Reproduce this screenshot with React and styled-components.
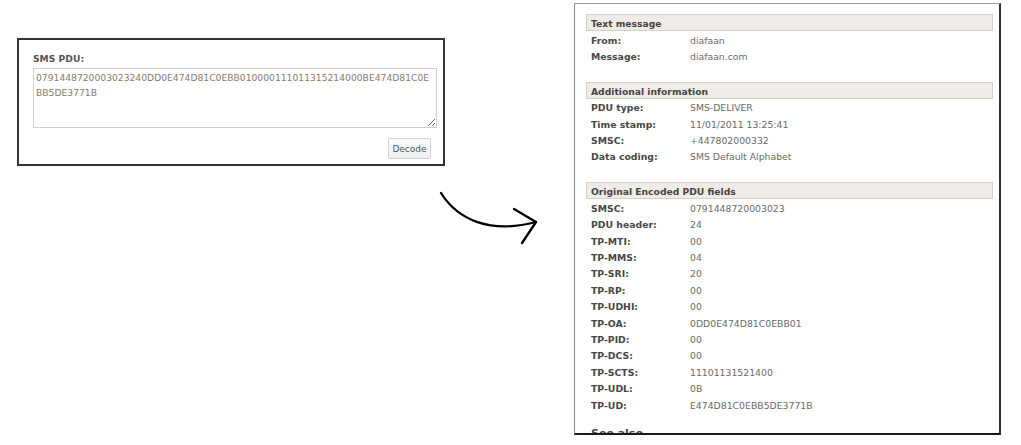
import React from "react";
import styled, { createGlobalStyle } from "styled-components";

const Global = createGlobalStyle`
  html, body { margin: 0; padding: 0; background: #fff; }
  body { font-family: "DejaVu Sans", Verdana, sans-serif; font-size: 9.2px; }
  * { box-sizing: border-box; }
`;

const Page = styled.div`
  display: flex;
  align-items: flex-start;
  width: 1021px;
  height: 445px;
  overflow: hidden;
`;

const FormBox = styled.div`
  margin: 38px 0 0 17px;
  width: 428px;
  height: 128px;
  border: 2px solid #333;
  padding: 12px 6px 5px 14px;
  display: flex;
  flex-direction: column;
`;

const FieldLabel = styled.label`
  font-weight: bold;
  font-size: 9.2px;
  line-height: 14px;
  color: #555;
  margin-bottom: 2px;
`;

const PduInput = styled.textarea`
  width: 404px;
  height: 60px;
  border: 1px solid #cfcfcf;
  padding: 1px 2px;
  font-family: "DejaVu Sans", Verdana, sans-serif;
  font-size: 9.2px;
  line-height: 15px;
  color: #8a7a6b;
  background: #fff;
  resize: both;
  outline: none;
  word-break: break-all;
`;

const ButtonRow = styled.div`
  display: flex;
  justify-content: flex-end;
  padding-right: 6px;
  margin-top: 10px;
`;

const DecodeButton = styled.button`
  height: 21px;
  width: 43px;
  padding: 0;
  border: 1px solid #d2d2d2;
  border-radius: 2px;
  background: linear-gradient(#fbfbfb, #efefef);
  font-family: "DejaVu Sans", Verdana, sans-serif;
  font-size: 9px;
  color: #555;
`;

const ArrowArea = styled.div`
  width: 129px;
  margin-top: 180px;
  flex-shrink: 0;
  svg { overflow: visible; display: block; }
`;

const ResultPanel = styled.div`
  margin-top: 3px;
  width: 427px;
  height: 432px;
  flex-shrink: 0;
  border-top: 1px solid #9a9a9a;
  border-left: 1px solid #8a8a8a;
  border-right: 2px solid #333;
  border-bottom: 2px solid #1a1a1a;
  padding: 10px 6px 0 11px;
  overflow: hidden;
`;

const Section = styled.section`
  margin-bottom: 16.5px;
`;

const SectionHeader = styled.div`
  height: 17px;
  background: #efece7;
  border: 1px solid #d6d1ca;
  padding-left: 4px;
  font-weight: bold;
  font-size: 9.2px;
  line-height: 17px;
  color: #454545;
  margin-bottom: 1.5px;
`;

const Rows = styled.div`
  display: flex;
  flex-direction: column;
`;

const Row = styled.div`
  display: grid;
  grid-template-columns: 99px 1fr;
  height: 16.4px;
  line-height: 16.4px;
  padding-left: 5px;
  font-size: 9.3px;
`;

const Label = styled.span`
  font-weight: bold;
  color: #474747;
`;

const Value = styled.span`
  color: #6a6a6a;
`;

const SeeAlso = styled.h3`
  margin: -3px 0 0 5px;
  font-size: 11px;
  line-height: 14px;
  font-weight: bold;
  color: #454545;
`;

const pdu =
  "0791448720003023240DD0E474D81C0EBB010000111011315214000BE474D81C0EBB5DE3771B";

const sections = [
  {
    title: "Text message",
    rows: [
      ["From:", "diafaan"],
      ["Message:", "diafaan.com"],
    ],
  },
  {
    title: "Additional information",
    rows: [
      ["PDU type:", "SMS-DELIVER"],
      ["Time stamp:", "11/01/2011 13:25:41"],
      ["SMSC:", "+447802000332"],
      ["Data coding:", "SMS Default Alphabet"],
    ],
  },
  {
    title: "Original Encoded PDU fields",
    rows: [
      ["SMSC:", "0791448720003023"],
      ["PDU header:", "24"],
      ["TP-MTI:", "00"],
      ["TP-MMS:", "04"],
      ["TP-SRI:", "20"],
      ["TP-RP:", "00"],
      ["TP-UDHI:", "00"],
      ["TP-OA:", "0DD0E474D81C0EBB01"],
      ["TP-PID:", "00"],
      ["TP-DCS:", "00"],
      ["TP-SCTS:", "11101131521400"],
      ["TP-UDL:", "0B"],
      ["TP-UD:", "E474D81C0EBB5DE3771B"],
    ],
  },
];

function Arrow() {
  return (
    <svg width="129" height="80" viewBox="0 0 129 80">
      <path
        d="M-4 13 C13 40, 45 54, 91 42"
        fill="none"
        stroke="#000"
        strokeWidth="2.3"
        strokeLinecap="round"
      />
      <path
        d="M69 29 L91 42 L77 63"
        fill="none"
        stroke="#000"
        strokeWidth="2.3"
        strokeLinecap="round"
        strokeLinejoin="round"
      />
    </svg>
  );
}

export default function App() {
  return (
    <>
      <Global />
      <Page>
        <FormBox>
          <FieldLabel htmlFor="pdu">SMS PDU:</FieldLabel>
          <PduInput id="pdu" readOnly defaultValue={pdu} spellCheck={false} />
          <ButtonRow>
            <DecodeButton type="button">Decode</DecodeButton>
          </ButtonRow>
        </FormBox>
        <ArrowArea>
          <Arrow />
        </ArrowArea>
        <ResultPanel>
          {sections.map((s) => (
            <Section key={s.title}>
              <SectionHeader>{s.title}</SectionHeader>
              <Rows>
                {s.rows.map(([l, v]) => (
                  <Row key={l + v}>
                    <Label>{l}</Label>
                    <Value>{v}</Value>
                  </Row>
                ))}
              </Rows>
            </Section>
          ))}
          <SeeAlso>See also</SeeAlso>
        </ResultPanel>
      </Page>
    </>
  );
}
